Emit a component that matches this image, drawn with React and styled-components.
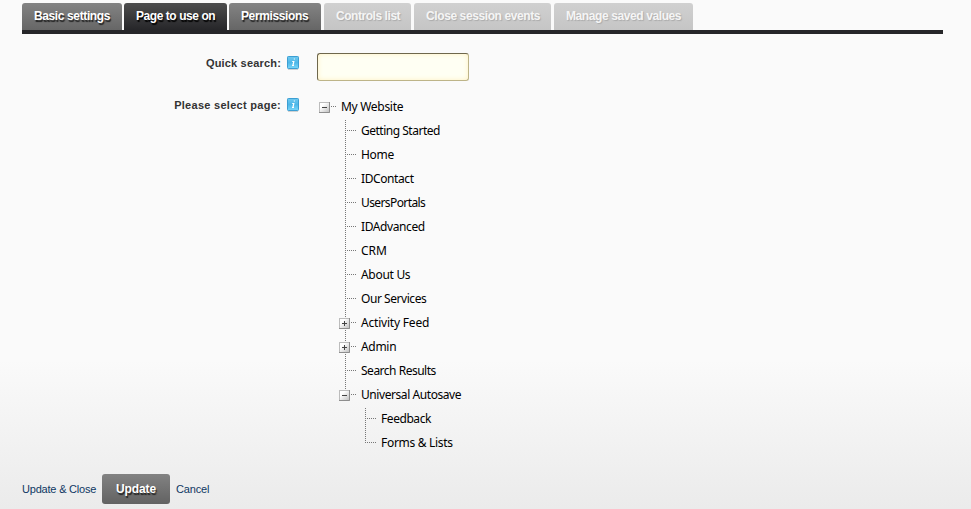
import React from "react";
import styled, { createGlobalStyle, css } from "styled-components";

const GlobalStyle = createGlobalStyle`
  * { box-sizing: border-box; }
  body { margin: 0; background: #fafafa; overflow: hidden; }
`;

const Page = styled.main`
  height: 509px;
  padding: 3px 28px 0 22px;
  overflow: hidden;
  background: linear-gradient(#fafafa 0, #fafafa 360px, #ebebeb 509px);
  font: 11px/14px "Liberation Sans", Arial, sans-serif;
  color: #333;
`;

const TabBar = styled.nav`
  display: flex;
  height: 31px;
  border-bottom: 4px solid #262629;
`;

const tabLooks = {
  normal: css`
    background: linear-gradient(#838383, #666);
    color: #fff;
    text-shadow: 1px 2px 1px #222;
  `,
  active: css`
    background: linear-gradient(#4d4d4d, #262629);
    color: #fff;
    text-shadow: 1px 2px 1px #000;
  `,
  disabled: css`
    background: linear-gradient(#d0d0d0, #c5c5c5);
    color: #f5f5f5;
    text-shadow: 1px 1px 1px #aaa;
  `,
};

const Tab = styled.button`
  flex: none;
  width: ${(p) => p.$width}px;
  height: 27px;
  margin: 0 ${(p) => p.$gap}px 0 0;
  padding: 0 0 0 12px;
  border: 0;
  border-radius: 3px 3px 0 0;
  font: bold 12px/27px "Liberation Sans", Arial, sans-serif;
  letter-spacing: ${(p) => p.$spacing}px;
  text-align: left;
  white-space: nowrap;
  ${(p) => tabLooks[p.$look]}
`;

const Form = styled.form`
  display: grid;
  grid-template-columns: 277px 1fr;
  column-gap: 18px;
  grid-template-rows: 42px 1fr;
  height: 421px;
  padding-top: 19px;
`;

const FieldLabel = styled.label`
  display: flex;
  justify-content: flex-end;
  align-items: flex-start;
  gap: 6px;
  padding-top: 3px;
  font-weight: bold;
  white-space: nowrap;
`;

const LabelText = styled.span`
  letter-spacing: ${(p) => p.$spacing}px;
`;

const InfoSvg = styled.svg`
  display: block;
  width: 12px;
  height: 14px;
`;

const SearchInput = styled.input`
  width: 152px;
  height: 28px;
  padding: 0 8px;
  border: 1px solid #bdb488;
  border-top-color: #6e674c;
  border-left-color: #6e674c;
  border-radius: 3px;
  outline: 0;
  background: #fffff3;
  box-shadow: inset 0 0 5px #fff0c0;
  font: 12px "Liberation Sans", Arial, sans-serif;
`;

const Tree = styled.ul`
  margin: 0;
  padding: 0 0 0 ${(p) => (p.$nested ? 20 : 2)}px;
  list-style: none;
`;

const dots = "#777 0 1px, transparent 1px 2px";

const TreeNode = styled.li`
  ${(p) =>
    p.$branch &&
    css`
      background: repeating-linear-gradient(${dots}) 6px 1px / 1px ${p.$last ? "11px" : "100%"} no-repeat;
    `}
`;

const TreeRow = styled.div`
  display: flex;
  align-items: center;
  height: 24px;
`;

const Connector = styled.span`
  width: 22px;
  height: 11px;
  background: repeating-linear-gradient(to right, ${dots}) 6px 4px / 11px 1px no-repeat;
`;

const ToggleSvg = styled.svg`
  display: block;
  width: 11px;
  height: 11px;
`;

const NodeLabel = styled.span`
  height: 24px;
  color: #000;
  font: 12px/24px "Noto Sans", "Open Sans", sans-serif;
  letter-spacing: ${(p) => p.$spacing}px;
  white-space: nowrap;
`;

const Actions = styled.footer`
  display: flex;
  align-items: center;
  height: 30px;
  margin-top: 19px;
`;

const ActionLink = styled.a`
  width: ${(p) => p.$width}px;
  color: #0f3863;
  letter-spacing: ${(p) => p.$spacing}px;
  white-space: nowrap;
`;

const UpdateButton = styled.button`
  width: 68px;
  height: 30px;
  margin: 0 6px 0 0;
  padding: 0;
  border: 0;
  border-radius: 3px;
  background: linear-gradient(#828282, #626262);
  color: #fff;
  font: bold 12px/30px "Liberation Sans", Arial, sans-serif;
  letter-spacing: -0.1px;
  text-shadow: 1px 2px 1px #222;
`;

function InfoIcon() {
  return (
    <InfoSvg viewBox="0 0 12 14">
      <defs>
        <linearGradient id="info" x2="0" y2="1">
          <stop stopColor="#70c9ef" />
          <stop offset=".5" stopColor="#4db7e8" />
          <stop offset="1" stopColor="#7ad6f9" />
        </linearGradient>
      </defs>
      <path d="M1 13.5h10" stroke="#d2d2d2" />
      <rect x=".5" y=".5" width="11" height="12" rx=".8" fill="url(#info)" stroke="#3c9fd3" />
      <path d="M6.8 3h1.1M5.2 5.5h1.6L5.9 9.5M5 9.5h2" stroke="#fff" strokeWidth="1.2" fill="none" />
    </InfoSvg>
  );
}

function Toggle({ open }) {
  return (
    <ToggleSvg viewBox="0 0 11 11">
      <defs>
        <linearGradient id="box" x2="1" y2="1">
          <stop offset=".3" stopColor="#fff" />
          <stop offset="1" stopColor="#bdbdbd" />
        </linearGradient>
      </defs>
      <rect x=".5" y=".5" width="10" height="10" fill="url(#box)" stroke="#bcbcbc" />
      <path d="M10.5 0v10.5H0" fill="none" stroke="#8e8e8e" />
      <path d={open ? "M3 5.5h5" : "M3 5.5h5M5.5 3v5"} stroke="#444" />
    </ToggleSvg>
  );
}

const tabs = [
  ["Basic settings", 100, 2, "normal", -0.38],
  ["Page to use on", 103, 2, "active", -0.44],
  ["Permissions", 92, 3, "normal", -0.38],
  ["Controls list", 87, 3, "disabled", -0.45],
  ["Close session events", 137, 3, "disabled", -0.4],
  ["Manage saved values", 139, 0, "disabled", -0.4],
];

const site = {
  name: "My Website",
  open: true,
  children: [
    { name: "Getting Started", spacing: -0.49 },
    { name: "Home" },
    { name: "IDContact", spacing: -0.4 },
    { name: "UsersPortals", spacing: -0.6 },
    { name: "IDAdvanced", spacing: -0.4 },
    { name: "CRM", spacing: 0 },
    { name: "About Us" },
    { name: "Our Services", spacing: -0.45 },
    { name: "Activity Feed", spacing: -0.2, open: false },
    { name: "Admin", open: false },
    { name: "Search Results", spacing: -0.49 },
    {
      name: "Universal Autosave",
      spacing: -0.43,
      open: true,
      children: [{ name: "Feedback", spacing: -0.43 }, { name: "Forms & Lists" }],
    },
  ],
};

function Node({ node, branch, last }) {
  return (
    <TreeNode $branch={branch} $last={last}>
      <TreeRow>
        <Connector>{node.open !== undefined && <Toggle open={node.open} />}</Connector>
        <NodeLabel $spacing={node.spacing ?? -0.3}>{node.name}</NodeLabel>
      </TreeRow>
      {node.children && (
        <Tree $nested>
          {node.children.map((child, i) => (
            <Node key={child.name} node={child} branch last={i === node.children.length - 1} />
          ))}
        </Tree>
      )}
    </TreeNode>
  );
}

export default function App() {
  return (
    <>
      <GlobalStyle />
      <Page>
        <TabBar>
          {tabs.map(([name, width, gap, look, spacing]) => (
            <Tab key={name} $width={width} $gap={gap} $look={look} $spacing={spacing}>
              {name}
            </Tab>
          ))}
        </TabBar>
        <Form>
          <FieldLabel>
            <LabelText $spacing={0.18}>Quick search:</LabelText>
            <InfoIcon />
          </FieldLabel>
          <SearchInput />
          <FieldLabel>
            <LabelText $spacing={0.28}>Please select page:</LabelText>
            <InfoIcon />
          </FieldLabel>
          <Tree>
            <Node node={site} />
          </Tree>
        </Form>
        <Actions>
          <ActionLink $width={80} $spacing={-0.2}>Update &amp; Close</ActionLink>
          <UpdateButton>Update</UpdateButton>
          <ActionLink $width={40} $spacing={-0.15}>Cancel</ActionLink>
        </Actions>
      </Page>
    </>
  );
}
